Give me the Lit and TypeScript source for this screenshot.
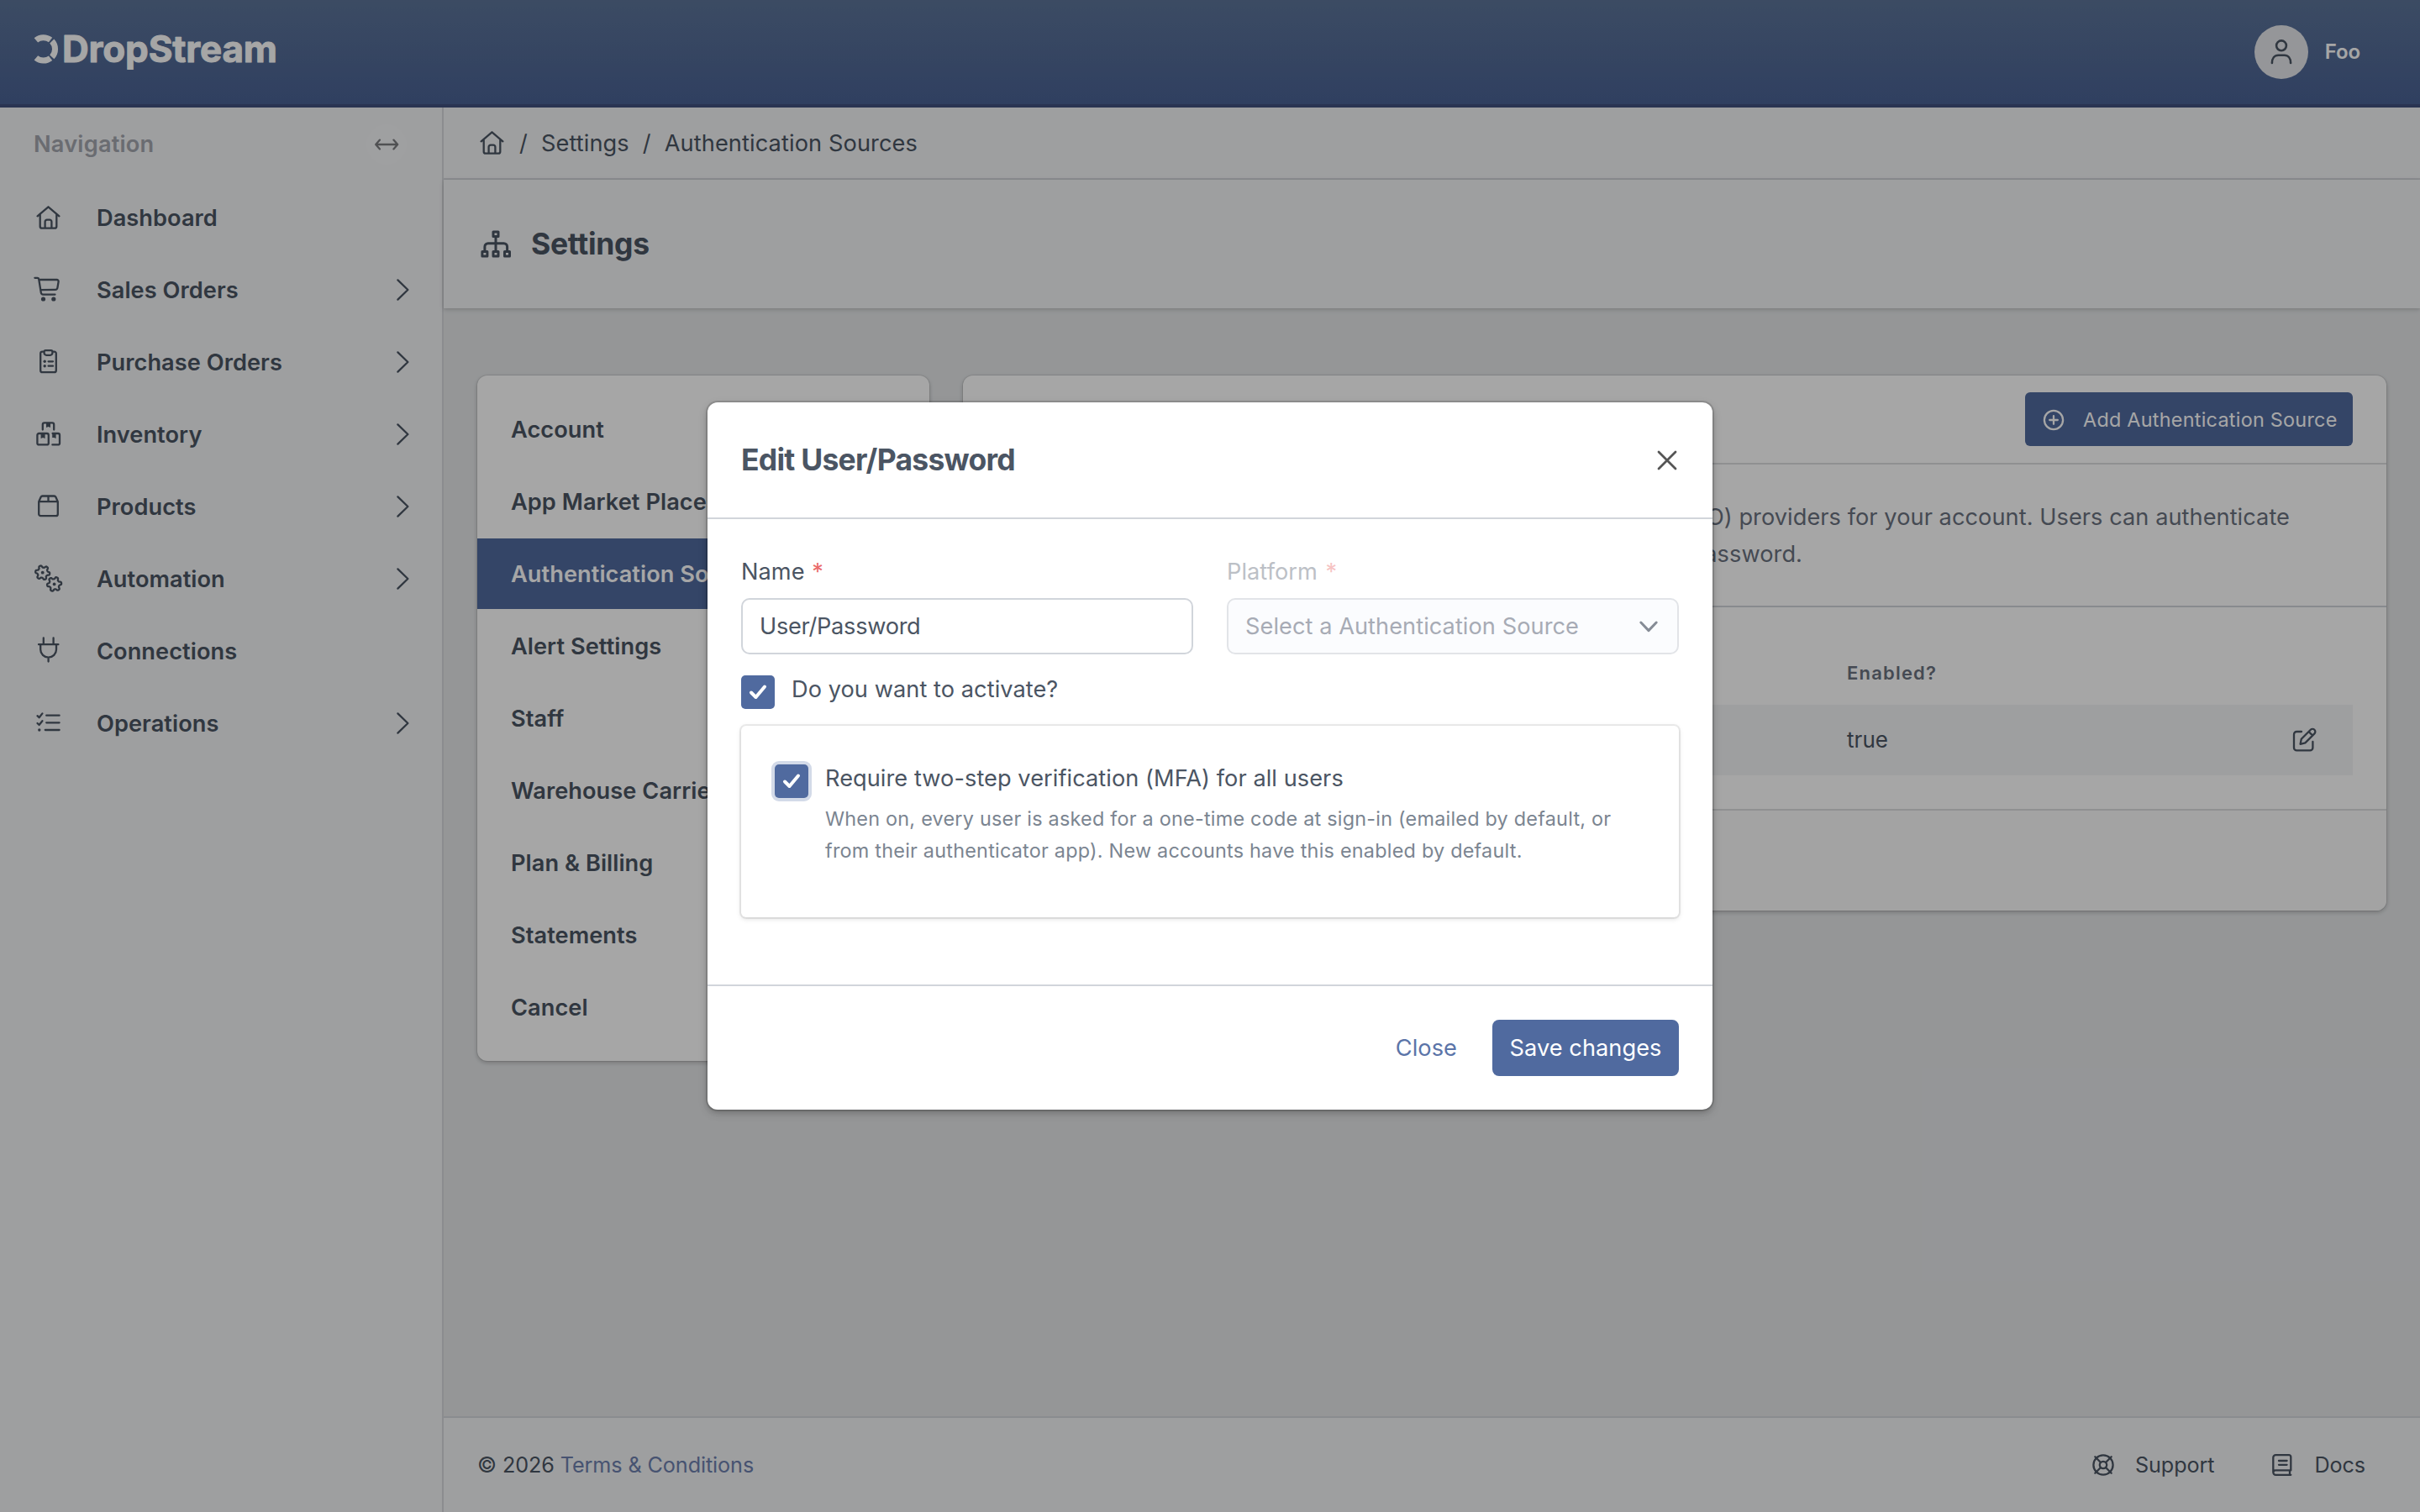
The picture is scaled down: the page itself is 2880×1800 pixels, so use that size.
import { LitElement, html, css, svg } from "lit";
import { customElement } from "lit/decorators.js";

// Outline of a small six-toothed cog centred on (cx, cy).
function gear(cx: number, cy: number, phase: number) {
  const pts: string[] = [];
  for (let i = 0; i < 84; i++) {
    const a = (i / 84) * Math.PI * 2;
    const r = 7.3 + 1.3 * Math.tanh(2 * Math.sin(6 * a + phase));
    pts.push(`${(cx + r * Math.cos(a)).toFixed(2)} ${(cy + r * Math.sin(a)).toFixed(2)}`);
  }
  return "M" + pts.join("L") + "Z";
}

const icons: Record<string, unknown> = {
  home: svg`<path d="M4.6 16.3 17.5 5.3 30.4 16.3M7.7 14.2V28.4a2.2 2.2 0 0 0 2.2 2.2H25.1a2.2 2.2 0 0 0 2.2-2.2V14.2M13.6 30.5V23a2.3 2.3 0 0 1 2.3-2.3h3.2a2.3 2.3 0 0 1 2.3 2.3v7.5"/>`,
  cart: svg`<path d="M1.4 3.8H4.4a1.8 1.8 0 0 1 1.8 1.5L8.8 21.4a2.6 2.6 0 0 0 2.5 2.2H25.5M6.4 6H27.6a2 2 0 0 1 2 2.4L28.4 15.6a2.6 2.6 0 0 1-2.5 2.2L8.4 18.2"/><circle class="fill" cx="11.5" cy="29" r="2.6"/><circle class="fill" cx="23.8" cy="29" r="2.6"/>`,
  clipboard: svg`<path d="M12 5.6H10.4a2.2 2.2 0 0 0-2.2 2.2V28a2.2 2.2 0 0 0 2.2 2.2H24.6a2.2 2.2 0 0 0 2.2-2.2V7.8a2.2 2.2 0 0 0-2.2-2.2H23M14.2 4.2h6.6a1.6 1.6 0 0 1 1.6 1.6v1.4a2.6 2.6 0 0 1-2.6 2.6h-4.6a2.6 2.6 0 0 1-2.6-2.6V5.8a1.6 1.6 0 0 1 1.6-1.6zM17.6 17.3h5.4M17.6 22.7h5.4"/><circle class="fill" cx="13.2" cy="17.3" r="1.7"/><circle class="fill" cx="13.2" cy="22.7" r="1.7"/>`,
  boxes: svg`<path d="M10.8 12.5V6.4a2 2 0 0 1 2-2h9.4a2 2 0 0 1 2 2v6.1M6.4 17h9.4a2 2 0 0 1 2 2v9.4a2 2 0 0 1-2 2H6.4a2 2 0 0 1-2-2V19a2 2 0 0 1 2-2zM22.6 17h6.400a2 2 0 0 1 2 2v9.400a2 2 0 0 1-2 2H22.400"/><path class="fill" d="M15 4h5v6l-2.500-1-2.500 1zM8.600 17h5v6l-2.500-1-2.500 1zM22.200 17h4.400v6l-2.200-1-2.200 0z"/>`,
  box: svg`<path d="M6.2 12.2V27a2.2 2.2 0 0 0 2.2 2.2H26.600a2.200 2.200 0 0 0 2.200-2.200V12.200L26.400 6.700a2.200 2.200 0 0 0-2-1.200H10.600a2.200 2.200 0 0 0-2 1.200zM6.200 12.200H28.800M17.500 5.500V12.200"/>`,
  gears: svg`<path d=${gear(10.7, 10.7, 0.6)} /><path d=${gear(24.6, 24.4, 2.4)} /><circle class="fill" cx="10.7" cy="10.7" r="1.9"/><circle class="fill" cx="24.6" cy="24.4" r="1.9"/>`,
  plug: svg`<path d="M11.8 2.5V10M23.6 2.5V10M6 10.2H29.4M8.2 10.2V16.2a9.4 9.4 0 0 0 18.8 0V10.2M17.6 25.6V30.5"/>`,
  checks: svg`<path d="M4.5 9.2 6.6 11.2 10.4 6.4M4.5 18 6.6 20 10.4 15.2M15.2 8.7H30.6M15.2 17.3H30.6M13.8 26H30.6"/><circle class="fill" cx="6.8" cy="26" r="1.7"/>`,
  chevron: svg`<path d="M12.4 6.4 24.4 18 12.4 29.6"/>`,
  arrows: svg`<path d="M5.4 18H31M10 12.6 5.2 18 10 23.4M26.4 12.6 31.2 18 26.4 23.4"/>`,
  user: svg`<circle cx="18" cy="10.3" r="5.9"/><path d="M6.9 31C6.9 25.5 9.8 21.7 14.4 21.7H21.6C26.2 21.7 29.1 25.5 29.1 31"/>`,
  plus: svg`<circle cx="18" cy="18" r="11.1"/><path d="M18 13.2V22.8M13.2 18H22.8"/>`,
  edit: svg`<path d="M14 8H8.2A3.2 3.2 0 0 0 5 11.2V27.2A3.2 3.2 0 0 0 8.2 30.4H24.2A3.2 3.2 0 0 0 27.4 27.2V20M12.6 22.8 13.8 16.8 24.8 5.8A2.9 2.9 0 0 1 29.4 10.4L18.4 21.4ZM22.6 8 27.2 12.6"/>`,
  ring: svg`<circle cx="18" cy="18" r="11.6"/><circle cx="18" cy="18" r="4.2"/><path d="M8.3 8.3 15 15M27.7 8.3 21 15M8.3 27.7 15 21M27.7 27.7 21 21"/>`,
  book: svg`<path d="M28.3 24.4V8.4A2.2 2.2 0 0 0 26.1 6.2H10.3A3 3 0 0 0 7.3 9.2V26.8A3 3 0 0 0 10.3 29.8H28.3M7.3 26.8A3 3 0 0 1 10.3 24.4H28.3M27 24.4V29.8M14 13H23.6M14 17.8H23.6"/>`,
  close: svg`<path d="M8 8 28 28M28 8 8 28"/>`,
  down: svg`<path d="M8.8 13 18 22.6 27.2 13"/>`,
};
const icon = (name: string) => html`<svg class="icon" viewBox="0 0 36 36">${icons[name]}</svg>`;
const tick = html`<svg viewBox="0 0 40 40"><path d="M12 20.5 17.5 26 28 13.5"/></svg>`;

const nav = [
  ["home", "Dashboard", false], ["cart", "Sales Orders", true], ["clipboard", "Purchase Orders", true],
  ["boxes", "Inventory", true], ["box", "Products", true], ["gears", "Automation", true],
  ["plug", "Connections", false], ["checks", "Operations", true],
] as [string, string, boolean][];
const sections = ["Account", "App Market Places", "Authentication Sources", "Alert Settings", "Staff",
  "Warehouse Carriers", "Plan & Billing", "Statements", "Cancel"];

@customElement("app-root")
export class AppRoot extends LitElement {
  static styles = css`
    :host { display: block; position: relative; width: 2880px; height: 1800px; overflow: hidden;
      font-family: Inter, "Liberation Sans", sans-serif; font-size: 27.2px; line-height: 44px; letter-spacing: 0.05px; color: #4b5563; }
    * { box-sizing: border-box; }
    .icon { width: 36px; height: 36px; flex: none; fill: none; stroke: currentColor; stroke-width: 2.3;
      stroke-linecap: round; stroke-linejoin: round; display: block; }
    .fill { fill: currentColor; stroke: none; }
    .app { height: 1800px; display: grid; grid-template: 128px 1fr / 528px 1fr; background: #e5e7e9; }
    .top { grid-column: 1 / 3; display: flex; justify-content: space-between; align-items: center;
      background: linear-gradient(#5c7499, #4a6294); border-bottom: 4px solid #41517f; padding: 0 71px 0 40px; }
    .logo { width: 300px; height: 60px; display: block; margin-top: -12px; }
    .user { display: flex; align-items: center; gap: 20px; color: #fff; font-size: 24px; font-weight: 640; letter-spacing: -0.1px; }
    .avatar { width: 64px; height: 64px; border-radius: 50%; background: #e5e7eb; color: #4b5563; display: flex;
      align-items: center; justify-content: center; }
    .avatar .icon { stroke-width: 2.6; }
    .side { background: #f3f4f6; border-right: 2px solid #d6d8dc; padding-top: 2px; }
    .side-head { height: 84px; display: flex; align-items: center; justify-content: space-between;
      padding: 0 42px 0 40px; font-weight: 640; letter-spacing: 0.2px; color: #a3a6ae; margin-bottom: 2px; }
    .toggle { width: 48px; height: 48px; border-radius: 50%; background: #f5f6f7; color: #7c7d80; display: flex;
      align-items: center; justify-content: center; }
    .nav-item { height: 86px; display: flex; align-items: center; padding: 0 29px 0 40px; font-weight: 560; }
    .label { flex: 1; padding: 2px 0 0 39px; }
    .main { display: flex; flex-direction: column; min-width: 0; }
    .crumbs { height: 86px; background: #f3f4f6; border-bottom: 2px solid #d5d7dc; display: flex;
      align-items: center; padding: 0 40px; gap: 16px; letter-spacing: 0.1px; }
    .crumbs .icon { margin-right: -2px; }
    .crumbs span { padding-top: 1px; }
    .title { height: 153px; background: #f3f4f6; display: flex; align-items: center; padding: 0 40px; gap: 20px;
      font-size: 35.5px; font-weight: 670; letter-spacing: -0.3px; box-shadow: 0 2px 6px rgba(0,0,0,.12), 0 1px 3px rgba(0,0,0,.08); }
    .sitemap { width: 44px; height: 44px; stroke-width: 3; }
    .content { flex: 1; display: flex; align-items: flex-start; gap: 40px; padding: 80px 40px 0; }
    .card { background: #fff; border-radius: 12px;
      box-shadow: 0 0 0 1px rgba(0,0,0,.07), 0 2px 6px rgba(0,0,0,.14), 0 2px 4px rgba(0,0,0,.1); }
    .menu { width: 538px; padding: 22px 0; display: flex; flex-direction: column; gap: 2px; font-weight: 560; }
    .menu-item { height: 84px; line-height: 86px; padding-left: 40px; }
    .active { background: #506a9f; color: #fff; }
    .sources { width: 1694px; height: 637px; display: flex; flex-direction: column; overflow: hidden; }
    .bar { height: 106px; border-bottom: 2px solid #dcdddf; display: flex; align-items: center;
      justify-content: flex-end; padding: 0 40px; }
    .add { height: 64px; width: 390px; border-radius: 6px; background: #506a9f; color: #fff; font-size: 23.4px;
      letter-spacing: 0.25px; display: flex; align-items: center; padding: 1px 0 0 16px; gap: 17px; }
    .about { height: 170px; border-bottom: 2px solid #d1d5db; color: #6b7280; padding: 41px 115px 0 0; text-align: right; }
    .about div { white-space: nowrap; }
    .about .second { padding-right: 580px; }
    .table { height: 242px; border-bottom: 2px solid #dcdddf; padding: 63px 40px 0; }
    .th { height: 53px; line-height: 30px; padding-left: 1012px; font-size: 22px; font-weight: 620; color: #6b7280; letter-spacing: 1.2px; }
    .tr { height: 84px; background: #f3f4f6; display: flex; align-items: center; justify-content: space-between;
      padding: 0 39px 0 1012px; font-size: 26px; }
    .foot { flex: 1; background: #fafafa; }
    .footer { height: 114px; border-top: 2px solid #d5d7dc; background: #f3f4f6; display: flex; align-items: center;
      padding: 0 65px 0 40px; font-size: 25.2px; letter-spacing: -0.1px; }
    .terms { color: #6d80ae; padding-left: 7px; flex: 1; }
    .flink { display: flex; align-items: center; gap: 20px; margin-left: 63px; }
    .overlay { position: absolute; inset: 0; background: rgba(0,0,0,.35); display: flex; align-items: center;
      justify-content: center; }
    .modal { width: 1196px; height: 842px; background: #fff; border-radius: 12px; display: flex;
      flex-direction: column; box-shadow: 0 0 0 2px rgba(0,0,0,.12), 0 4px 12px rgba(0,0,0,.16), 0 3px 6px rgba(0,0,0,.12); }
    .mhead { height: 139px; border-bottom: 2px solid #d1d5db; display: flex; align-items: center;
      justify-content: space-between; padding: 0 36px 0 40px; font-size: 35.5px; font-weight: 670; letter-spacing: -0.75px; }
    .mhead .icon { color: #555; stroke-width: 2.8; }
    .mbody { flex: 1; padding: 40px 40px 0; }
    .fields { display: grid; grid-template-columns: 538px 538px; gap: 40px; }
    .flabel { height: 54px; line-height: 45px; }
    .req { color: #ea6a6a; margin-left: 1px; }
    .input { height: 67px; border: 2px solid #d1d5db; border-radius: 10px; display: flex; align-items: center;
      justify-content: space-between; padding: 0 16px 0 20px; }
    .tight { letter-spacing: -0.3px; }
    .disabled .flabel { color: #bcc0c6; }
    .disabled .req { color: #f6c3c3; margin-left: 2px; }
    .disabled .input { background: #fbfcfe; border-color: #e2e4e8; color: #a7abb5; }
    .disabled .icon { color: #868c96; stroke-width: 3; }
    .check { display: flex; gap: 20px; line-height: 44px; }
    .c1 { margin-top: 20px; height: 65px; }
    .tick { width: 40px; height: 40px; flex: none; border-radius: 5px; background: #506a9f; margin-top: 5px; }
    .tick svg { display: block; width: 40px; height: 40px; fill: none; stroke: #fff; stroke-width: 4; stroke-linecap: round; stroke-linejoin: round; }
    .focus { box-shadow: 0 0 0 4px #d3dae8; }
    .mfa { height: 228px; border-radius: 6px; padding: 41px 40px 0;
      box-shadow: 0 0 0 2px rgba(0,0,0,.07), 0 2px 6px rgba(0,0,0,.13); }
    .help { font-size: 23.4px; line-height: 38px; letter-spacing: 0.23px; color: #7b8591; white-space: nowrap; padding-top: 7px; }
    .mfoot { height: 149px; border-top: 2px solid #d1d5db; display: flex; align-items: center;
      justify-content: flex-end; padding: 0 40px; gap: 42px; }
    .link { color: #5b74a8; }
    .save { width: 222px; height: 67px; line-height: 67px; border-radius: 8px; background: #506a9f; color: #fff; text-align: center; }
  `;

  render() {
    return html`
      <div class="app">
        <header class="top">
          <svg class="logo" viewBox="40 26 300 60">
            <g fill="none" stroke="#fff" stroke-width="7">
              <path d="M42.9 47.9A13.7 13.7 0 0 1 60.1 47.6M61.8 49A13.7 13.7 0 0 1 61.8 67.8M60.1 69.2A13.7 13.7 0 0 1 42.9 68.9"/>
            </g>
            <text x="74" y="73.5" fill="#fff" stroke="#fff" stroke-width="1" stroke-linejoin="round" font-size="44" font-weight="650" textLength="256">DropStream</text>
          </svg>
          <div class="user"><div class="avatar">${icon("user")}</div><span>Foo</span></div>
        </header>
        <aside class="side">
          <div class="side-head"><span>Navigation</span><div class="toggle">${icon("arrows")}</div></div>
          ${nav.map(([i, t, sub]) => html`<div class="nav-item">${icon(i)}<span class="label">${t}</span>${sub ? icon("chevron") : ""}</div>`)}
        </aside>
        <main class="main">
          <div class="crumbs">${icon("home")}<span>/</span><span>Settings</span><span>/</span><span>Authentication Sources</span></div>
          <div class="title">
            <svg class="icon sitemap" viewBox="0 0 44 44"><path d="M19 7h6v5.5h-6zM22 13V29M8.9 29V24.7a4 4 0 0 1 4-4H31.6a4 4 0 0 1 4 4V29M5.9 30.5h6V36h-6zM19 30.5h6V36h-6zM32.5 30.5h6V36h-6z"/></svg>
            <span>Settings</span>
          </div>
          <div class="content">
            <div class="card menu">${sections.map((s) => html`<div class="menu-item ${s === "Authentication Sources" ? "active" : ""}">${s}</div>`)}</div>
            <div class="card sources">
              <div class="bar"><div class="add">${icon("plus")}<span>Add Authentication Source</span></div></div>
              <div class="about"><div>(SSO) providers for your account. Users can authenticate</div><div class="second">password.</div></div>
              <div class="table"><div class="th">Enabled?</div><div class="tr"><span>true</span>${icon("edit")}</div></div>
              <div class="foot"></div>
            </div>
          </div>
          <footer class="footer"><span>© 2026</span><span class="terms">Terms &amp; Conditions</span>
            <div class="flink">${icon("ring")}<span>Support</span></div><div class="flink">${icon("book")}<span>Docs</span></div></footer>
        </main>
      </div>
      <div class="overlay">
        <div class="modal">
          <div class="mhead"><span>Edit User/Password</span>${icon("close")}</div>
          <div class="mbody">
            <div class="fields">
              <div><div class="flabel">Name <span class="req">*</span></div><div class="input"><span class="tight">User/Password</span></div></div>
              <div class="disabled"><div class="flabel">Platform <span class="req">*</span></div><div class="input"><span>Select a Authentication Source</span>${icon("down")}</div></div>
            </div>
            <div class="check c1"><div class="tick">${tick}</div><span>Do you want to activate?</span></div>
            <div class="mfa"><div class="check"><div class="tick focus">${tick}</div>
              <div><div>Require two-step verification (MFA) for all users</div>
              <div class="help">When on, every user is asked for a one-time code at sign-in (emailed by default, or<br>from their authenticator app). New accounts have this enabled by default.</div></div></div></div>
          </div>
          <div class="mfoot"><span class="link">Close</span><div class="save">Save changes</div></div>
        </div>
      </div>`;
  }
}
